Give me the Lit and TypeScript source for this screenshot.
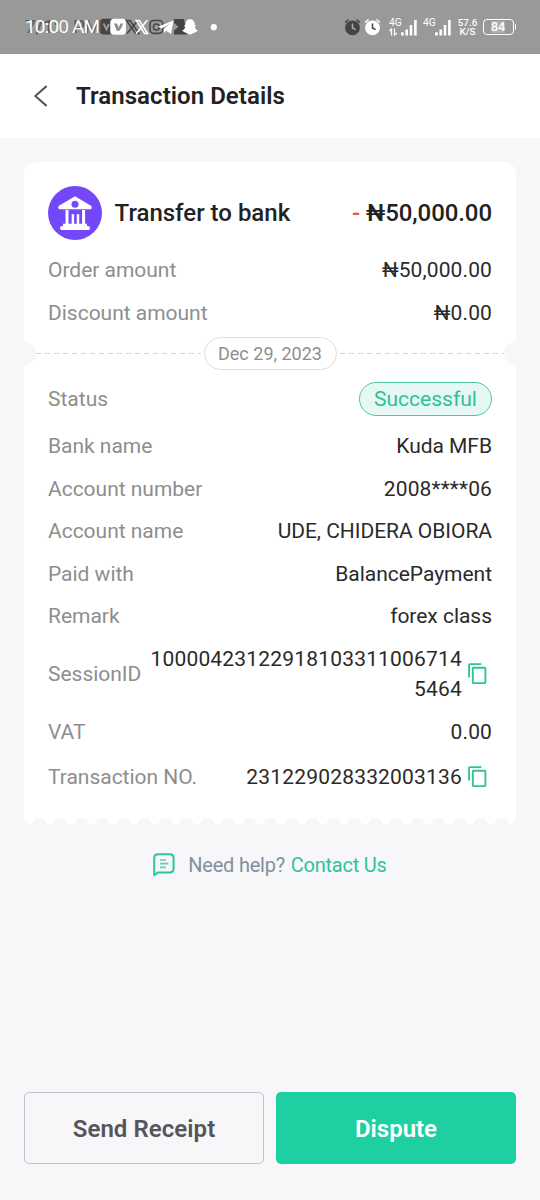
import { LitElement, html, css, svg, nothing } from "lit";
import { customElement, property } from "lit/decorators.js";

const copyIcon = html`<svg class="copy" width="20" height="22" viewBox="0 0 20 22" fill="none" stroke="#2fc39a" stroke-width="1.9">
  <path d="M1.1 14.6V1.9Q1.1 1.1 1.9 1.1H13.4" />
  <rect x="4.8" y="4.7" width="12.6" height="15.4" rx="0.8" />
</svg>`;

const alarm = (color: string, hand: string) => svg`
  <circle cx="8.5" cy="9.8" r="7.4" fill=${color} />
  <path d="M1 4.5 4.6 1.5M16 4.5 12.4 1.5" stroke=${color} stroke-width="1.6" fill="none" />
  <path d="M8.5 5.6V10L11.6 11.6" stroke=${hand} stroke-width="1.5" fill="none" />`;

const signal = svg`<path d="M1.4 17.5V14.3M5.7 17.5V11.5M10 17.5V7M14.4 17.5V2" stroke="#fff" stroke-width="2.6" />`;

@customElement("status-bar")
export class StatusBar extends LitElement {
  static styles = css`
    :host { display: flex; height: 54px; box-sizing: border-box; background: #999; justify-content: space-between; color: #fff; font-family: Roboto, sans-serif; }
    .left { display: flex; align-items: center; padding-left: 25px; }
    .clock { position: relative; width: 75px; font-size: 19px; line-height: 56px; white-space: pre; }
    .time { position: relative; letter-spacing: -0.85px; }
    .ghost { position: absolute; left: 0; top: 0; color: #555; letter-spacing: -0.2px; }
    .right { display: flex; align-items: center; padding-right: 24px; }
    .alarms { display: block; margin-right: 7px; }
    .net { display: flex; flex-direction: column; font-size: 10.3px; line-height: 10.5px; width: 12px; height: 19px; white-space: nowrap; }
    .bars { display: block; }
    .first { margin-right: 6px; }
    .speed { width: 22px; font-size: 9.9px; line-height: 9.5px; text-align: center; font-weight: 500; margin: 0 4px 0 5.5px; }
    .battery { display: flex; align-items: center; }
    .cell { width: 31px; height: 16.5px; box-sizing: border-box; border: 1.4px solid #fff; border-radius: 4px; display: flex; align-items: center; justify-content: center; }
    .level { font-size: 12.5px; line-height: 12px; font-weight: 500; background: #aeaeae; }
    .cap { width: 1.5px; height: 6px; margin-left: 1px; background: #fff; border-radius: 0 2px 2px 0; }
  `;
  render() {
    return html`
      <div class="left">
        <div class="clock"><span class="ghost">7/1:0 PM</span><span class="time">10:00 AM</span></div>
        <svg width="120" height="20" viewBox="100 17 120 20">
          <rect x="100.3" y="18.8" width="15" height="15.6" rx="3" fill="#444" />
          <path d="M103.5 23.5 106.5 29.5 109 24" stroke="#999" stroke-width="2" fill="none" />
          <rect x="110.3" y="18.8" width="15.6" height="16" rx="3.5" fill="#fff" />
          <path d="M114 23.5H117L118.6 27.8 120.4 23.5H123Q122.5 27 119.5 30.8H116.8Z" fill="#8c8c8c" />
          <path d="M126.5 20.5H130L139 33.5H135.5ZM138 20.5 127 33.5" stroke="#444" stroke-width="1.5" fill="none" />
          <path d="M136.3 20.5H139.3L147.6 33.5H144.6ZM147.3 20.3 136 33.8" stroke="#fff" stroke-width="1.6" fill="none" />
          <rect x="150" y="20.5" width="12.8" height="12.8" rx="3.6" stroke="#484848" stroke-width="1.7" fill="none" />
          <circle cx="156.4" cy="27" r="3" stroke="#484848" stroke-width="1.6" fill="none" />
          <path d="M174 19H184L187 34.4H174Z" fill="#444" />
          <path d="M174 23 178.5 26.8 174 30.5Z" fill="#999" />
          <path d="M158 26.8 173.5 20.5 171 34 166.2 30.8 164 33 163.5 29.3 170 23.5 161.8 28.4Z" fill="#fff" />
          <path d="M190 19.2C186.6 19.2 185.3 21.6 185.4 25L183.8 25.3 185.2 26.8C184.8 29 183.6 30 182.2 30.8 183 31.7 184.6 31.8 185.1 32.7 187.2 32.3 188 34.5 190 34.5S192.9 32.3 195 32.7C195.4 31.8 197 31.7 197.9 30.8 196.4 30 195.3 29 194.8 26.8L196.3 25.3 194.7 25C194.8 21.6 193.4 19.2 190 19.2Z" fill="#fff" />
          <circle cx="213.8" cy="27.2" r="3.1" fill="#fff" />
        </svg>
      </div>
      <div class="right">
        <svg class="alarms" width="38" height="18" viewBox="0 0 38 18">
          ${alarm("#444", "#aaa")}<g transform="translate(20 0)">${alarm("#fff", "#444")}</g>
        </svg>
        <div class="net"><span>4G</span><svg width="9" height="8" viewBox="0 0 9 8" fill="none" stroke="#fff" stroke-width="1.3"><path d="M2.5 7.5V1L.5 3M5.5.5V7L7.8 5" /></svg></div>
        <svg class="bars first" width="16" height="18" viewBox="0 0 16 18">${signal}</svg>
        <div class="net"><span>4G</span></div>
        <svg class="bars" width="16" height="18" viewBox="0 0 16 18">${signal}</svg>
        <div class="speed">57.6<br />K/S</div>
        <div class="battery"><div class="cell"><span class="level">84</span></div><div class="cap"></div></div>
      </div>`;
  }
}

@customElement("detail-row")
export class DetailRow extends LitElement {
  @property() label = "";
  @property() value = "";
  @property({ type: Boolean }) copyable = false;
  static styles = css`
    :host { display: flex; align-items: center; justify-content: space-between; font-size: 21px; line-height: 30.5px; min-height: 30.5px; }
    .label { color: #8e8e8e; white-space: nowrap; letter-spacing: -0.02px; }
    .value { display: flex; align-items: center; color: #2a2a2a; }
    .text { text-align: right; overflow-wrap: anywhere; letter-spacing: -0.03px; }
    .digits { letter-spacing: 0.12px; }
    .long { max-width: 315px; letter-spacing: 0.18px; }
    .copy { flex: none; margin: 0 4px 0 6px; }
  `;
  render() {
    const kind = this.copyable ? "long" : /\d/.test(this.value) ? "digits" : "";
    return html`<span class="label">${this.label}</span>
      <span class="value"><span class="text ${kind}">${this.value}</span>${this.copyable ? copyIcon : nothing}</span>`;
  }
}

@customElement("app-root")
export class AppRoot extends LitElement {
  static styles = css`
    :host { display: flex; flex-direction: column; height: 1200px; width: 540px; background: #f7f7fa; font-family: Roboto, sans-serif; color: #222; overflow: hidden; }
    .header { height: 84px; flex: none; background: #fff; display: flex; align-items: center; padding-left: 33px; }
    .back { margin-right: 28px; }
    .title { font-size: 24px; font-weight: 600; line-height: 32px; letter-spacing: 0.06px; }
    .card { margin: 24px 24px 0; height: 662px; flex: none; background: #fff; border-radius: 12px 12px 7px 7px; display: flex; flex-direction: column; }
    .body { padding: 0 24px; display: flex; flex-direction: column; gap: 12px; }
    .summary { display: flex; align-items: center; height: 54px; margin: 24px 24px 15px; }
    .bank { margin-right: 12.6px; }
    .name { font-size: 24px; font-weight: 500; flex: 1; }
    .total { font-size: 24px; font-weight: 500; letter-spacing: -0.08px; }
    .minus { color: #e8564f; }
    .divider { display: flex; align-items: center; justify-content: space-between; height: 33px; margin-top: 9px; overflow: hidden; }
    .notch { width: 12px; height: 23px; background: #f7f7fa; flex: none; }
    .l { border-radius: 0 12px 12px 0; }
    .r { border-radius: 12px 0 0 12px; }
    .dash { height: 1.5px; flex: 1; background: repeating-linear-gradient(90deg, #d6d6d6 0 5px, transparent 5px 9px); }
    .dl { margin-right: 3px; }
    .dr { margin-left: 3px; }
    .date { box-sizing: border-box; width: 133px; height: 33px; border: 1.5px solid #dedede; border-radius: 17px; display: flex; align-items: center; justify-content: center; font-size: 18px; color: #8e8e8e; }
    .status { display: flex; justify-content: space-between; align-items: center; height: 34px; margin: 12px 24px 15px; font-size: 21px; color: #8e8e8e; }
    .pill { box-sizing: border-box; width: 133px; height: 34px; border: 1.4px solid #4cc9a5; border-radius: 17px; background: #e6f8f4; color: #2fc096; display: flex; align-items: center; justify-content: center; }
    .tall { min-height: 36.5px; }
    .scallop { margin: auto 4.5px 0; height: 7px; background: radial-gradient(circle at 10.5px 8px, #f7f7fa 7px, transparent 7.6px) 0 0 / 21px 7px repeat-x; }
    .help { display: flex; justify-content: center; align-items: center; margin-top: 27px; height: 28px; font-size: 20px; letter-spacing: -0.22px; color: #82909c; white-space: pre; }
    .chat { margin-right: 13px; }
    .link { color: #2fc39a; margin-left: 1px; }
    .actions { margin: auto 24px 36px; display: grid; grid-template-columns: 1fr 1fr; gap: 12px; }
    .btn { box-sizing: border-box; height: 72px; padding-top: 2px; border-radius: 5px; display: flex; align-items: center; justify-content: center; font-size: 24px; font-weight: 600; }
    .outline { border: 1.4px solid #c4c4c8; color: #55555a; letter-spacing: 0.06px; }
    .solid { background: #1ed0a1; color: #fff; }
  `;
  render() {
    return html`
      <status-bar></status-bar>
      <div class="header">
        <svg class="back" width="15" height="22" viewBox="0 0 15 22" fill="none" stroke="#525f68" stroke-width="2.2" stroke-linecap="round" stroke-linejoin="round"><path d="M13 1.7 2.3 11 13 20.3" /></svg>
        <span class="title">Transaction Details</span>
      </div>
      <div class="card">
        <div class="summary">
          <svg class="bank" width="54" height="54" viewBox="0 0 54 54">
            <circle cx="27" cy="27" r="27" fill="#7547fb" />
            <path d="M27 10.2 43.4 20Q44.3 23 42.5 23.2H11.5Q9.7 23 10.6 20Z" fill="#fff" />
            <circle cx="27" cy="18.2" r="3.5" fill="#7547fb" />
            <path d="M19 24V39M35.6 24V39" stroke="#fff" stroke-width="3" />
            <path d="M24.9 28.2V39M30 28.2V39" stroke="#fff" stroke-width="2.5" />
            <path d="M15 37.7H39V40H40.3Q42 40.3 42 42.2T40.3 44H13.7Q12 44 12 42.2T13.7 40H15Z" fill="#fff" />
          </svg>
          <span class="name">Transfer to bank</span>
          <span class="total"><span class="minus">-</span> ₦50,000.00</span>
        </div>
        <div class="body">
          <detail-row label="Order amount" value="₦50,000.00"></detail-row>
          <detail-row label="Discount amount" value="₦0.00"></detail-row>
        </div>
        <div class="divider">
          <span class="notch l"></span><span class="dash dl"></span><span class="date">Dec 29, 2023</span><span class="dash dr"></span><span class="notch r"></span>
        </div>
        <div class="status"><span>Status</span><span class="pill">Successful</span></div>
        <div class="body">
          <detail-row label="Bank name" value="Kuda MFB"></detail-row>
          <detail-row label="Account number" value="2008****06"></detail-row>
          <detail-row label="Account name" value="UDE, CHIDERA OBIORA"></detail-row>
          <detail-row label="Paid with" value="BalancePayment"></detail-row>
          <detail-row label="Remark" value="forex class"></detail-row>
          <detail-row label="SessionID" value="100004231229181033110067145464" copyable></detail-row>
          <detail-row label="VAT" value="0.00"></detail-row>
          <detail-row class="tall" label="Transaction NO." value="231229028332003136" copyable></detail-row>
        </div>
        <div class="scallop"></div>
      </div>
      <div class="help">
        <svg class="chat" width="22" height="24" viewBox="0 0 22 24" fill="none" stroke="#2fc39a">
          <path d="M1.2 22.3V5.2Q1.2 1.2 5.2 1.2H16.6Q20.6 1.2 20.6 5.2V15.4Q20.6 19.4 16.6 19.4H5Z" stroke-width="2" stroke-linejoin="round" />
          <path d="M7 7H13M7 10.6H15.3M7 14.4H13" stroke-width="1.6" opacity=".75" />
        </svg><span>Need help? </span><span class="link">Contact Us</span>
      </div>
      <div class="actions">
        <div class="btn outline">Send Receipt</div>
        <div class="btn solid">Dispute</div>
      </div>`;
  }
}
